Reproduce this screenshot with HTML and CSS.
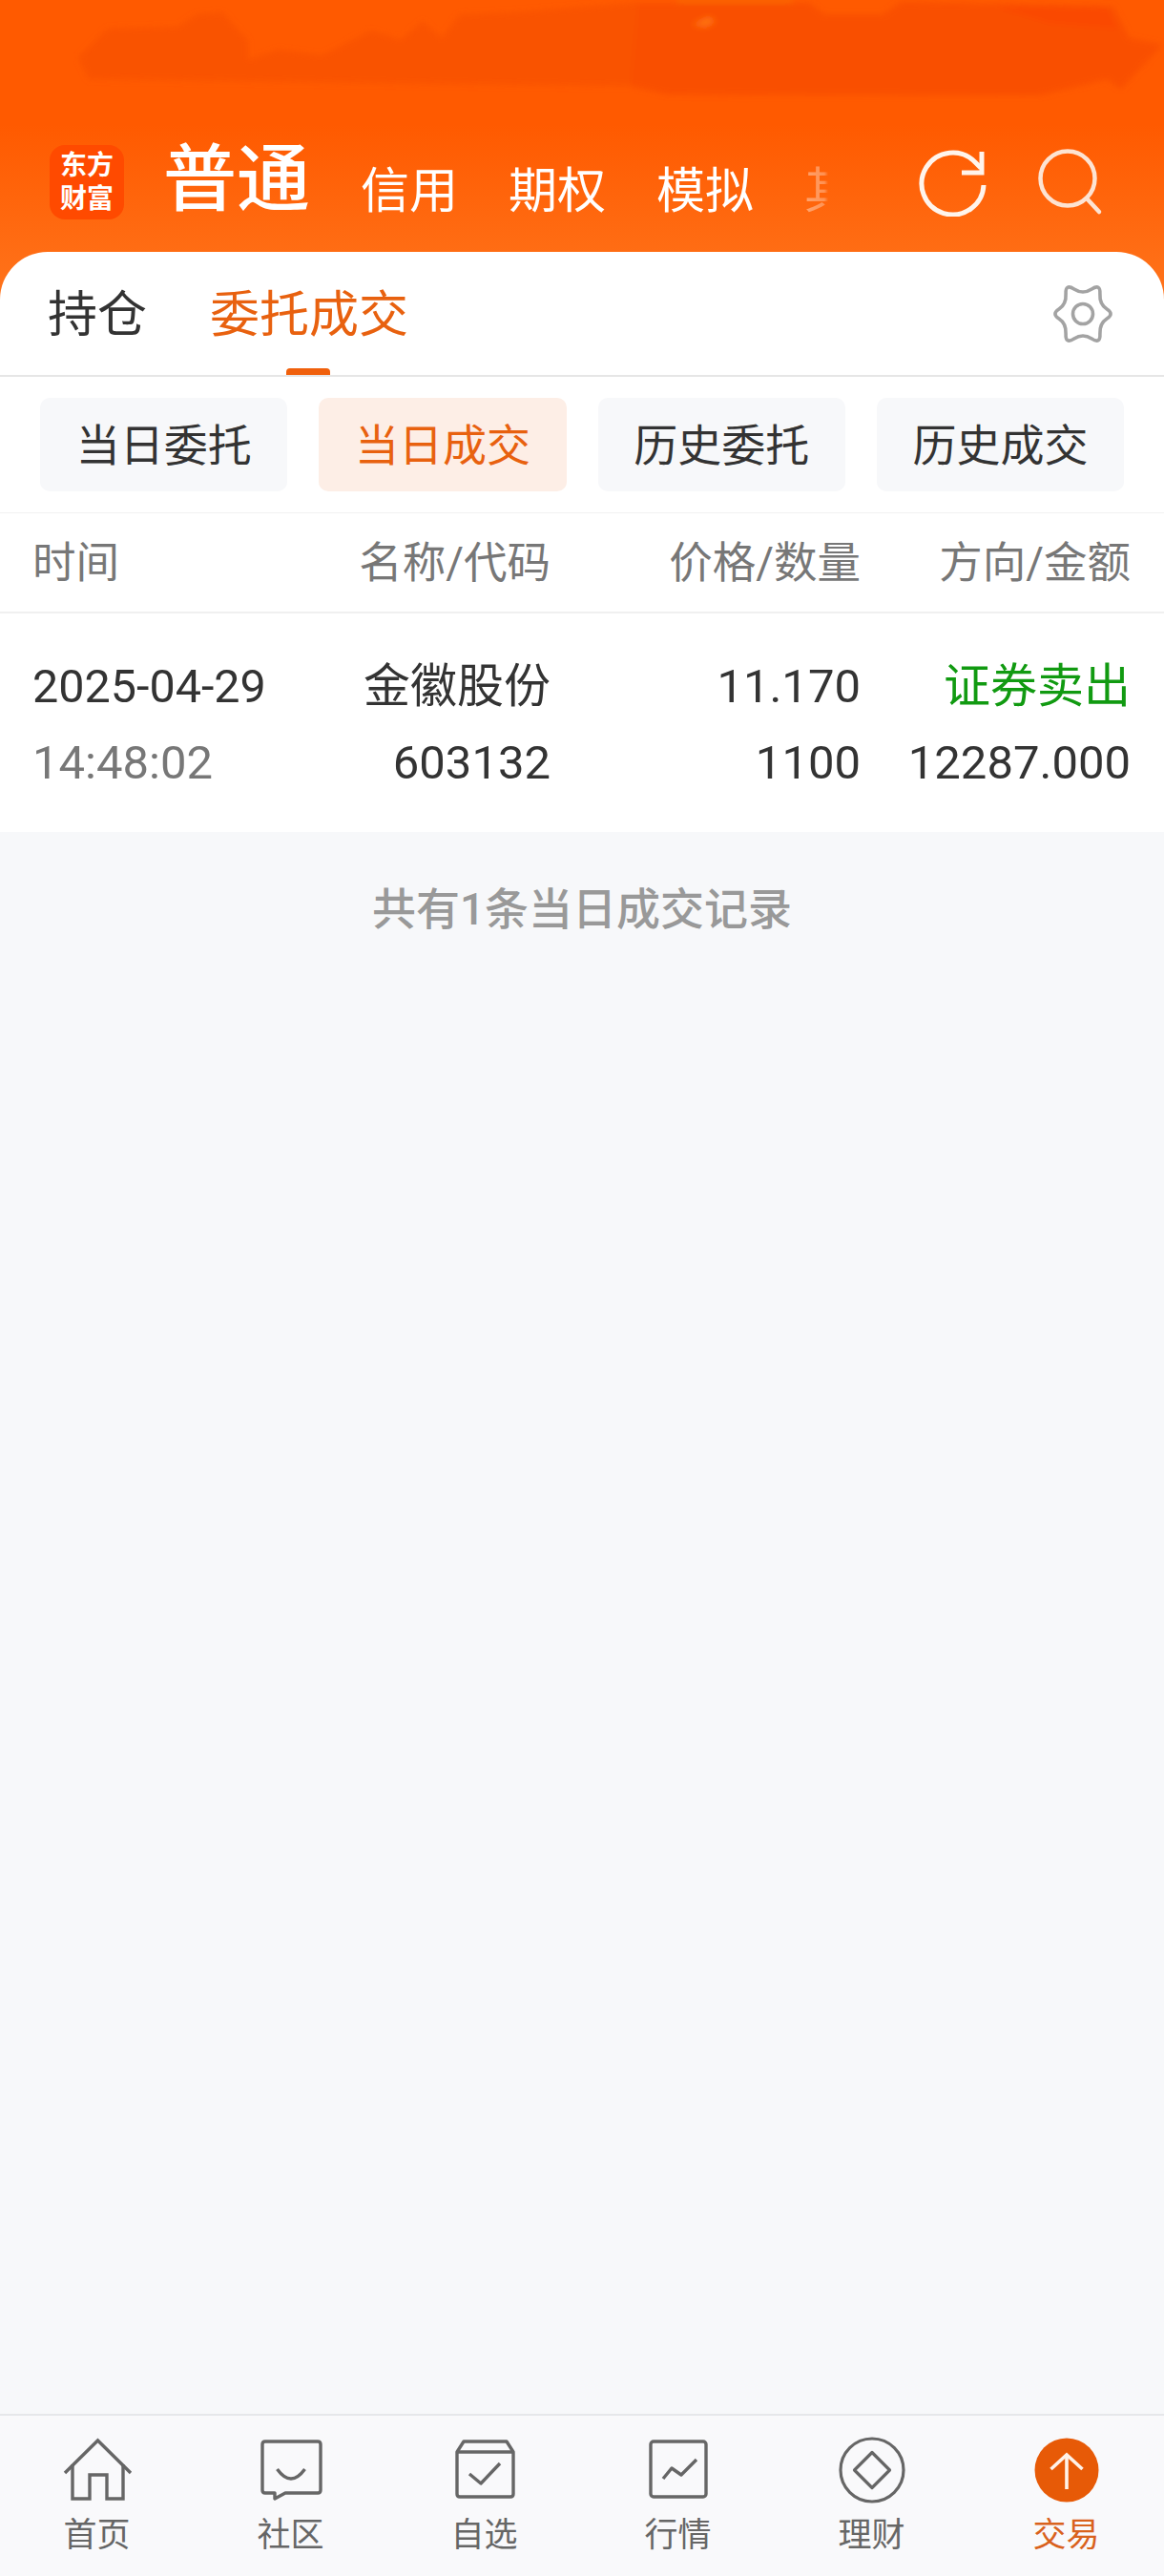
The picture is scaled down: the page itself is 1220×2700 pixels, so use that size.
FILE: index.html
```html
<!DOCTYPE html>
<html lang="zh-CN">
<head>
    <meta charset="UTF-8">
    <meta name="viewport" content="width=device-width, initial-scale=1.0">
    <title>交易 - 当日成交</title>
    <link rel="stylesheet" href="styles.css">
</head>
<body>
    <div class="app">
        <header class="top">
            <!-- smeared area over the status bar -->
            <svg class="smear" viewBox="0 0 1220 110" width="1220" height="110">
                <defs>
                    <filter id="soft"><feGaussianBlur stdDeviation="3"></feGaussianBlur></filter>
                </defs>
                <g filter="url(#soft)">
                    <path fill="#f95300" d="M82 60 113 30 187 28 206 15 233 13 260 43 260 63 292 52 338 58 389 32 420 42 443 22 463 40 482 15 537 13 669 3 848 3 864 15 926 15 945 2 1167 7 1183 40 1218 47 1175 93 1160 83 1089 100 700 99 661 90 389 87 93 83Z"></path>
                    <path fill="#f94f00" d="M669 3 848 3 864 15 926 15 945 2 1167 7 1183 40 1218 47 1175 93 1160 83 1089 100 700 99 661 90Z"></path>
                    <path fill="#fa4a00" d="M1040 6 1160 8 1172 30 1100 24Z"></path>
                    <path fill="#ff7412" d="M726 26 742 18 750 22 740 28Z"></path>
                    <path fill="#f57a08" d="M710 0H830V2H710Z"></path>
                </g>
            </svg>

            <div class="top-bar">
                <div class="logo">东方<br>财富</div>
                <nav class="account-tabs">
                    <a class="account-tab current">普通</a>
                    <a class="account-tab">信用</a>
                    <a class="account-tab">期权</a>
                    <a class="account-tab">模拟</a>
                    <a class="account-tab">其他</a>
                </nav>
                <div class="top-icons">
                    <svg class="icon-refresh" viewBox="0 0 72 72" width="72" height="72" fill="none" stroke="#fff4ec" stroke-width="5">
                        <path d="M69 39A32.500 32.500 0 1 1 60 15L66 21"></path>
                        <path d="M67 4V26H46"></path>
                    </svg>
                    <svg class="icon-search" viewBox="0 0 70 72" width="70" height="72" fill="none" stroke="#fde3d2" stroke-width="4.5">
                        <circle cx="33" cy="32" r="28.5"></circle>
                        <path d="M53 53 66 67" stroke-linecap="round"></path>
                    </svg>
                </div>
            </div>
        </header>

        <section class="panel">
            <div class="main-tabs">
                <a class="main-tab">持仓</a>
                <a class="main-tab active">委托成交</a>
                <svg class="icon-gear" viewBox="-32 -32 64 64" width="64" height="64" fill="none" stroke="#a3a3a3" stroke-width="3.6">
                    <path d="M25.15 -5Q33 0 25.15 5Q17.3 10 17.9 21Q18.5 32 9.25 26Q0 20 -9.25 26Q-18.5 32 -17.9 21Q-17.3 10 -25.15 5Q-33 0 -25.15 -5Q-17.3 -10 -17.9 -21Q-18.5 -32 -9.25 -26Q0 -20 9.25 -26Q18.5 -32 17.9 -21Q17.3 -10 25.15 -5Z"></path>
                    <circle r="10.5"></circle>
                </svg>
            </div>

            <div class="filters">
                <a class="filter">当日委托</a>
                <a class="filter active">当日成交</a>
                <a class="filter">历史委托</a>
                <a class="filter">历史成交</a>
            </div>

            <div class="row table-head">
                <span>时间</span>
                <span>名称/代码</span>
                <span>价格/数量</span>
                <span>方向/金额</span>
            </div>

            <div class="row deal">
                <span class="deal-date">2025-04-29</span>
                <span>金徽股份</span>
                <span>11.170</span>
                <span class="sell">证券卖出</span>
                <span class="deal-time">14:48:02</span>
                <span>603132</span>
                <span>1100</span>
                <span>12287.000</span>
            </div>
        </section>

        <main class="list-end">共有1条当日成交记录</main>

        <footer class="bottom-nav">
            <a class="nav-item">
                <svg viewBox="0 0 80 72" width="80" height="72" fill="none" stroke="#666" stroke-width="3.4">
                    <path d="M6 38 40.5 4 75 38"></path>
                    <path d="M14 29V65H32V40H50V65H67V29"></path>
                </svg>
                <span>首页</span>
            </a>
            <a class="nav-item">
                <svg viewBox="0 0 80 72" width="80" height="72" fill="none" stroke="#666" stroke-width="3.4" stroke-linejoin="round">
                    <path d="M13 5H68Q71 5 71 8V56Q71 59 68 59H34L23 65V59H13Q10 59 10 56V8Q10 5 13 5Z"></path>
                    <path d="M25.5 34Q40 54 54.5 34"></path>
                </svg>
                <span>社区</span>
            </a>
            <a class="nav-item">
                <svg viewBox="0 0 80 72" width="80" height="72" fill="none" stroke="#666" stroke-width="3.4" stroke-linejoin="round">
                    <path d="M18 5H63L70 16V60Q70 63 67 63H14Q11 63 11 60V16Z"></path>
                    <path d="M11 16H70"></path>
                    <path d="M24 39 36 49 56 28"></path>
                </svg>
                <span>自选</span>
            </a>
            <a class="nav-item">
                <svg viewBox="0 0 80 72" width="80" height="72" fill="none" stroke="#666" stroke-width="3.4" stroke-linejoin="round">
                    <rect x="11" y="5" width="58" height="58" rx="3"></rect>
                    <path d="M24 44 33 33 43 40 59 24"></path>
                </svg>
                <span>行情</span>
            </a>
            <a class="nav-item">
                <svg viewBox="0 0 80 72" width="80" height="72" fill="none" stroke="#666" stroke-width="3.2" stroke-linejoin="round">
                    <circle cx="40" cy="35" r="33"></circle>
                    <path d="M40 16.5 58.500 35 40 53.500 21.500 35Z"></path>
                </svg>
                <span>理财</span>
            </a>
            <a class="nav-item current">
                <svg viewBox="0 0 80 72" width="80" height="72" fill="none" stroke="#fff2e8" stroke-width="3.6">
                    <circle cx="40" cy="35" r="33.500" fill="#e75a07" stroke="none"></circle>
                    <path d="M40 20V55"></path>
                    <path d="M23.500 34 40 19 56.500 34"></path>
                </svg>
                <span>交易</span>
            </a>
        </footer>
    </div>
</body>
</html>
```

FILE: styles.css
```css
html, body {
    margin: 0;
    padding: 0;
    width: 1220px;
    height: 2700px;
    font-family: Roboto, "Noto Sans CJK SC", sans-serif;
    color: #333;
}

a {
    color: inherit;
    text-decoration: none;
}

.app {
    display: flex;
    flex-direction: column;
    height: 2700px;
    background-color: #f7f8fa;
    /* the orange runs on behind the rounded corners of the panel */
    background-image: linear-gradient(#ff5a00 0, #ff5a00 130px, #ff761e 330px);
    background-repeat: no-repeat;
    background-size: 100% 330px;
}

/* Top bar */
.top {
    position: relative;
    height: 264px;
}

.smear {
    position: absolute;
    top: 0;
    left: 0;
}

.top-bar {
    display: flex;
    align-items: flex-start;
    padding: 152px 0 0 52px;
}

.logo {
    width: 78px;
    height: 78px;
    box-sizing: border-box;
    padding-top: 4px;
    border-radius: 16px;
    background: #ff4a00;
    color: #fff;
    font-size: 28px;
    font-weight: 700;
    line-height: 35px;
    text-align: center;
}

.account-tabs {
    display: flex;
    align-items: flex-end;
    gap: 53px;
    width: 699px;
    height: 90px;
    margin: -9px 0 0 41px;
    overflow: hidden;
    color: #fff;
    font-size: 51px;
    line-height: 64px;
    white-space: nowrap;
    -webkit-mask-image: linear-gradient(to right, #000 671px, rgba(0, 0, 0, 0.4) 675px, rgba(0, 0, 0, 0.3) 693px, transparent 697px);
    mask-image: linear-gradient(to right, #000 671px, rgba(0, 0, 0, 0.4) 675px, rgba(0, 0, 0, 0.3) 693px, transparent 697px);
}

.account-tab.current {
    font-size: 77px;
    font-weight: 500;
    line-height: 88px;
}

.top-icons {
    display: flex;
    margin-left: 92px;
    gap: 52px;
    margin-top: 3px;
}

/* Panel */
.panel {
    background: #fff;
    border-radius: 50px 50px 0 0;
}

.main-tabs {
    display: flex;
    align-items: center;
    gap: 66px;
    height: 129px;
    padding: 0 53px 0 50px;
    border-bottom: 2px solid #e6e6e6;
    font-size: 52px;
    line-height: 134px;
}

.main-tab {
    position: relative;
    height: 129px;
}

.main-tab.active {
    color: #e8610f;
}

.main-tab.active::after {
    content: "";
    position: absolute;
    left: 80px;
    bottom: 0;
    width: 46px;
    height: 7px;
    border-radius: 4px 4px 0 0;
    background: #f0600c;
}

.icon-gear {
    margin-left: auto;
}

.filters {
    display: flex;
    gap: 33px;
    padding: 22px 42px;
    border-bottom: 1px solid #f2f2f2;
}

.filter {
    flex: 1;
    height: 98px;
    border-radius: 10px;
    background: #f7f8fa;
    font-size: 46px;
    line-height: 100px;
    text-align: center;
}

.filter.active {
    background: #fdeee6;
    color: #e8610f;
}

/* Table */
.row {
    display: grid;
    grid-template-columns: 300px 243px 325px 283px;
    padding: 0 35px 0 34px;
    text-align: right;
    white-space: nowrap;
}

.row span:nth-child(4n+1) {
    text-align: left;
}

.table-head {
    height: 103px;
    border-bottom: 2px solid #f0f0f0;
    color: #777;
    font-size: 45.5px;
    line-height: 106px;
}

.deal {
    align-content: center;
    box-sizing: border-box;
    height: 229px;
    padding-top: 5px;
    font-size: 49px;
    line-height: 80px;
}

.deal-date {
    font-size: 48.5px;
}

.deal-time {
    color: #777;
}

.sell {
    color: #119a11;
}

.list-end {
    flex: 1;
    padding-top: 50px;
    color: #999;
    font-size: 46px;
    font-weight: 500;
    line-height: 62px;
    text-align: center;
}

/* Bottom navigation */
.bottom-nav {
    display: grid;
    grid-template-columns: repeat(5, 203px) 1fr;
    box-sizing: border-box;
    height: 170px;
    padding-top: 22px;
    border-top: 2px solid #e6e7ea;
    background: #f9f9fb;
}

.nav-item {
    display: flex;
    flex-direction: column;
    align-items: center;
    color: #666;
    font-size: 35px;
    line-height: 40px;
}

.nav-item svg {
    margin-bottom: 12px;
}

.nav-item.current {
    color: #d9621d;
}
```
